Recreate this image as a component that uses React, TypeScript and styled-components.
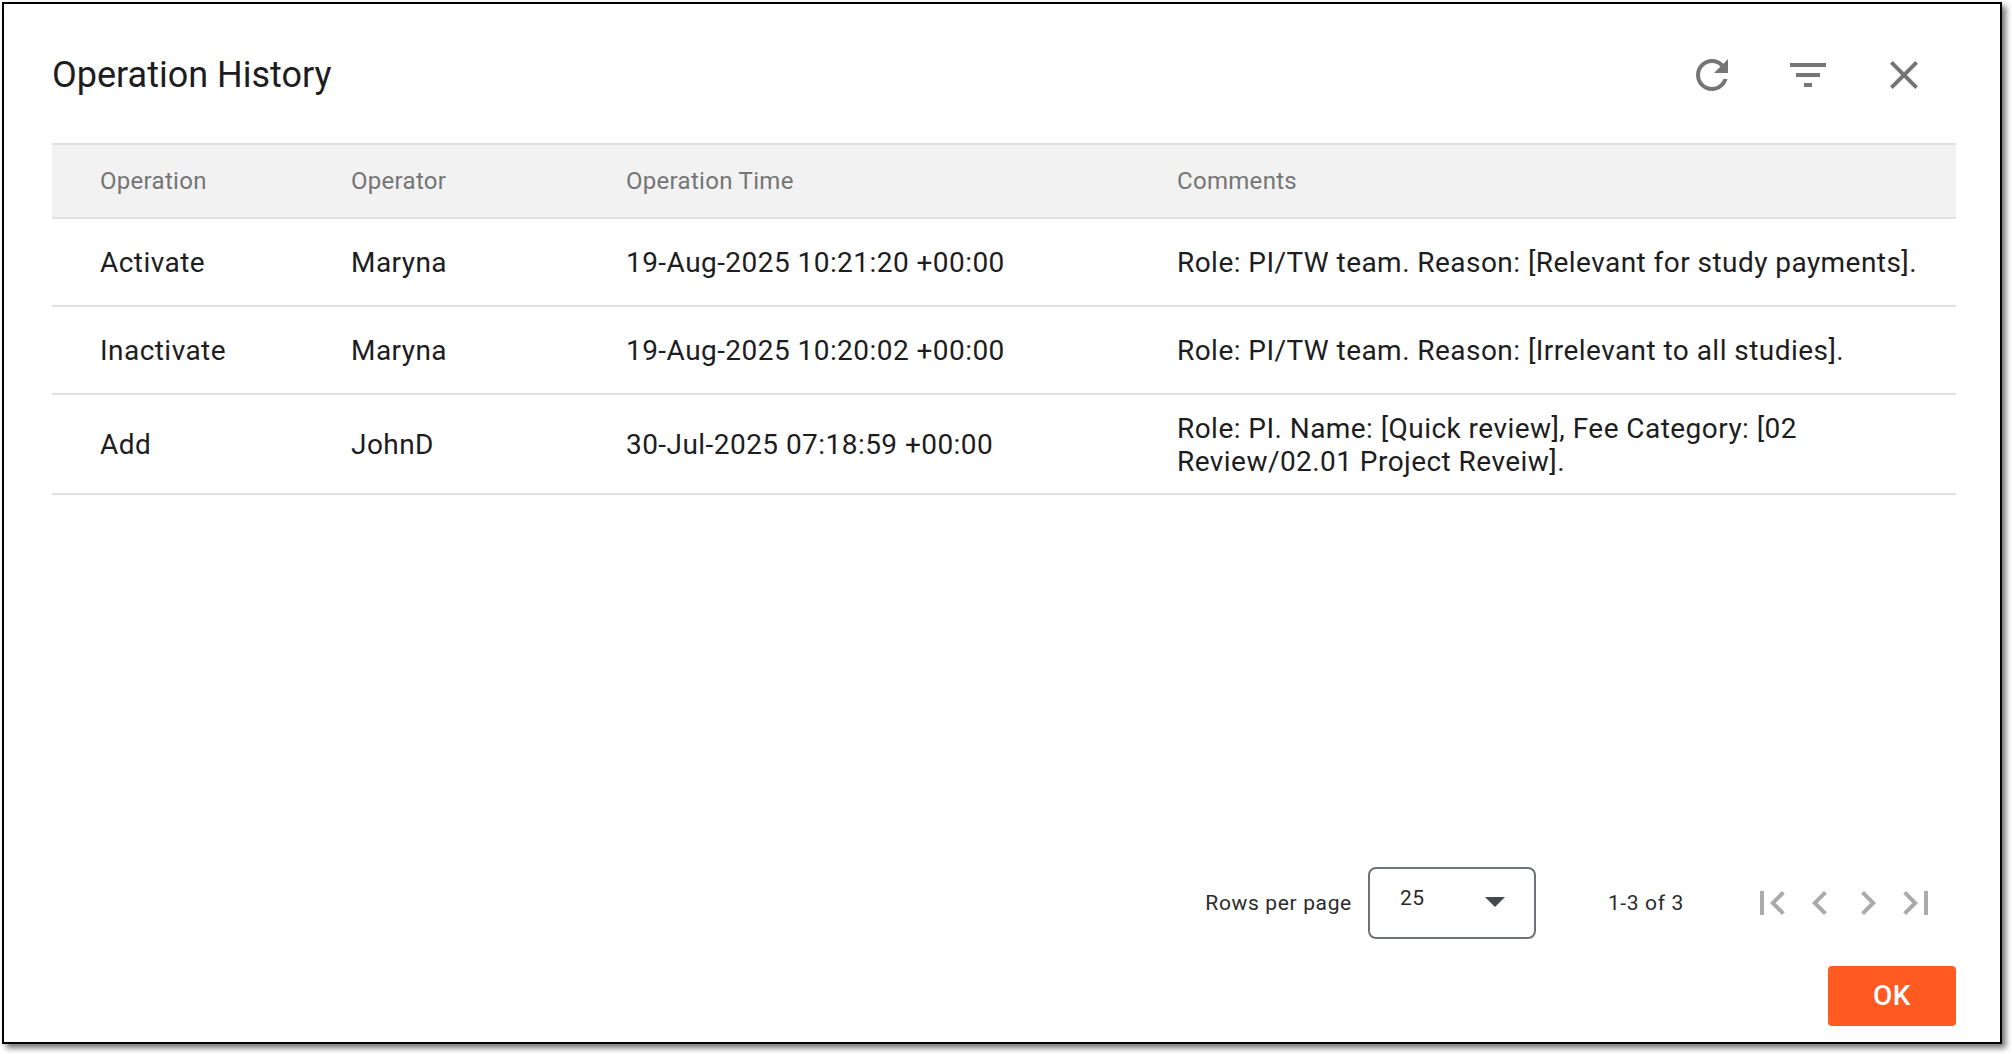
import { createGlobalStyle } from "styled-components";
import styled from "styled-components";

const GlobalStyle = createGlobalStyle`
  html, body {
    margin: 0;
    padding: 0;
    background: #fff;
    font-family: Roboto, "Liberation Sans", sans-serif;
  }
`;

const Page = styled.div`
  box-sizing: border-box;
  width: 2012px;
  height: 1054px;
  padding: 2px 10px 10px 2px;
`;

const Dialog = styled.div`
  box-sizing: border-box;
  display: flex;
  flex-direction: column;
  height: 100%;
  padding: 0 44px 16px 48px;
  background: #fff;
  border: 2px solid #000;
  box-shadow: 4px 4px 6px rgba(0, 0, 0, 0.55);
`;

const Header = styled.div`
  box-sizing: border-box;
  display: flex;
  align-items: center;
  justify-content: space-between;
  height: 139px;
  padding-top: 3px;
`;

const Title = styled.h1`
  margin: 0;
  color: #1d1d1f;
  font-size: 36px;
  font-weight: 400;
`;

const Tools = styled.div`
  display: flex;
  margin-right: 4px;
`;

const ToolButton = styled.div`
  display: flex;
  align-items: center;
  justify-content: center;
  width: 96px;
  height: 96px;
  color: #757575;
`;

const Icon = styled.svg`
  display: block;
  width: 48px;
  height: 48px;
  fill: currentColor;
`;

const Table = styled.div`
  border-top: 2px solid #e0e0e0;
`;

const Row = styled.div<{ $head?: boolean; $h: number }>`
  display: grid;
  grid-template-columns: 251px 275px 551px 1fr;
  align-items: center;
  box-sizing: border-box;
  height: ${(p) => p.$h}px;
  padding: 1px 0 0 48px;
  background: ${(p) => (p.$head ? "#f2f2f2" : "#fff")};
  border-bottom: 2px solid #e0e0e0;
  color: ${(p) => (p.$head ? "#757575" : "#1d1d1f")};
  font-size: ${(p) => (p.$head ? 24 : 28)}px;
  letter-spacing: ${(p) => (p.$head ? 0.3 : 0.45)}px;
  line-height: 33px;
`;

const Spacer = styled.div`
  flex: 1;
`;

const Pagination = styled.div`
  display: flex;
  align-items: center;
  justify-content: flex-end;
  height: 72px;
  color: #2b2b2d;
  font-size: 21px;
  letter-spacing: 0.65px;
`;

const RowsLabel = styled.span`
  margin-right: 16px;
  padding-bottom: 1px;
`;

const RowsSelect = styled.div`
  box-sizing: border-box;
  display: flex;
  align-items: center;
  justify-content: space-between;
  width: 168px;
  height: 72px;
  padding: 0 15px 5px 30px;
  border: 2px solid #6f7278;
  border-radius: 8px;
  color: #2b2b2d;
`;

const SelectValue = styled.span`
  padding-bottom: 5px;
`;

const Caret = styled(Icon)`
  color: #44474d;
`;

const RangeText = styled.span`
  margin: 0 64px 0 72px;
`;

const PagerButtons = styled.div`
  display: flex;
  margin-right: 16px;
  color: #aaaaaa;
`;

const Footer = styled.div`
  display: flex;
  justify-content: flex-end;
  margin-top: 27px;
`;

const OkButton = styled.button`
  width: 128px;
  height: 60px;
  padding: 0 0 2px;
  background: #ff5a22;
  border: none;
  border-radius: 4px;
  color: #fff;
  font-family: inherit;
  font-size: 28px;
  font-weight: 500;
  letter-spacing: 0.4px;
`;

const rows = [
  {
    h: 88,
    op: "Activate",
    by: "Maryna",
    at: "19-Aug-2025 10:21:20 +00:00",
    note: "Role: PI/TW team. Reason: [Relevant for study payments].",
  },
  {
    h: 88,
    op: "Inactivate",
    by: "Maryna",
    at: "19-Aug-2025 10:20:02 +00:00",
    note: "Role: PI/TW team. Reason: [Irrelevant to all studies].",
  },
  {
    h: 100,
    op: "Add",
    by: "JohnD",
    at: "30-Jul-2025 07:18:59 +00:00",
    note: "Role: PI. Name: [Quick review], Fee Category: [02 Review/02.01 Project Reveiw].",
  },
];

const pagerPaths = [
  "M18.41 16.59L13.82 12l4.59-4.59L17 6l-6 6 6 6zM6 6h2v12H6z",
  "M15.41 7.41L14 6l-6 6 6 6 1.41-1.41L10.83 12z",
  "M10 6L8.59 7.41 13.17 12l-4.58 4.59L10 18l6-6z",
  "M5.59 7.41L10.18 12l-4.59 4.59L7 18l6-6-6-6zM16 6h2v12h-2z",
];

export default function App() {
  return (
    <>
      <GlobalStyle />
      <Page>
        <Dialog>
          <Header>
            <Title>Operation History</Title>
            <Tools>
              <ToolButton>
                <Icon viewBox="0 0 24 24">
                  <path d="M17.65 6.35C16.2 4.9 14.21 4 12 4c-4.42 0-7.99 3.58-7.99 8s3.57 8 7.99 8c3.73 0 6.84-2.55 7.73-6h-2.08c-.82 2.33-3.04 4-5.65 4-3.31 0-6-2.69-6-6s2.69-6 6-6c1.66 0 3.14.69 4.22 1.78L13 11h7V4l-2.35 2.35z" />
                </Icon>
              </ToolButton>
              <ToolButton>
                <Icon viewBox="0 0 24 24">
                  <path d="M10 18h4v-2h-4v2zM3 6v2h18V6H3zm3 7h12v-2H6v2z" />
                </Icon>
              </ToolButton>
              <ToolButton>
                <Icon viewBox="0 0 24 24">
                  <path d="M19 6.41 17.59 5 12 10.59 6.41 5 5 6.41 10.59 12 5 17.59 6.41 19 12 13.41 17.59 19 19 17.59 13.41 12z" />
                </Icon>
              </ToolButton>
            </Tools>
          </Header>
          <Table>
            <Row $head $h={74}>
              <span>Operation</span>
              <span>Operator</span>
              <span>Operation Time</span>
              <span>Comments</span>
            </Row>
            {rows.map((row) => (
              <Row key={row.at} $h={row.h}>
                <span>{row.op}</span>
                <span>{row.by}</span>
                <span>{row.at}</span>
                <span>{row.note}</span>
              </Row>
            ))}
          </Table>
          <Spacer />
          <Pagination>
            <RowsLabel>Rows per page</RowsLabel>
            <RowsSelect>
              <SelectValue>25</SelectValue>
              <Caret viewBox="0 0 24 24">
                <path d="M7 10l5 5 5-5z" />
              </Caret>
            </RowsSelect>
            <RangeText>1-3 of 3</RangeText>
            <PagerButtons>
              {pagerPaths.map((d) => (
                <Icon key={d} viewBox="0 0 24 24">
                  <path d={d} />
                </Icon>
              ))}
            </PagerButtons>
          </Pagination>
          <Footer>
            <OkButton>OK</OkButton>
          </Footer>
        </Dialog>
      </Page>
    </>
  );
}
